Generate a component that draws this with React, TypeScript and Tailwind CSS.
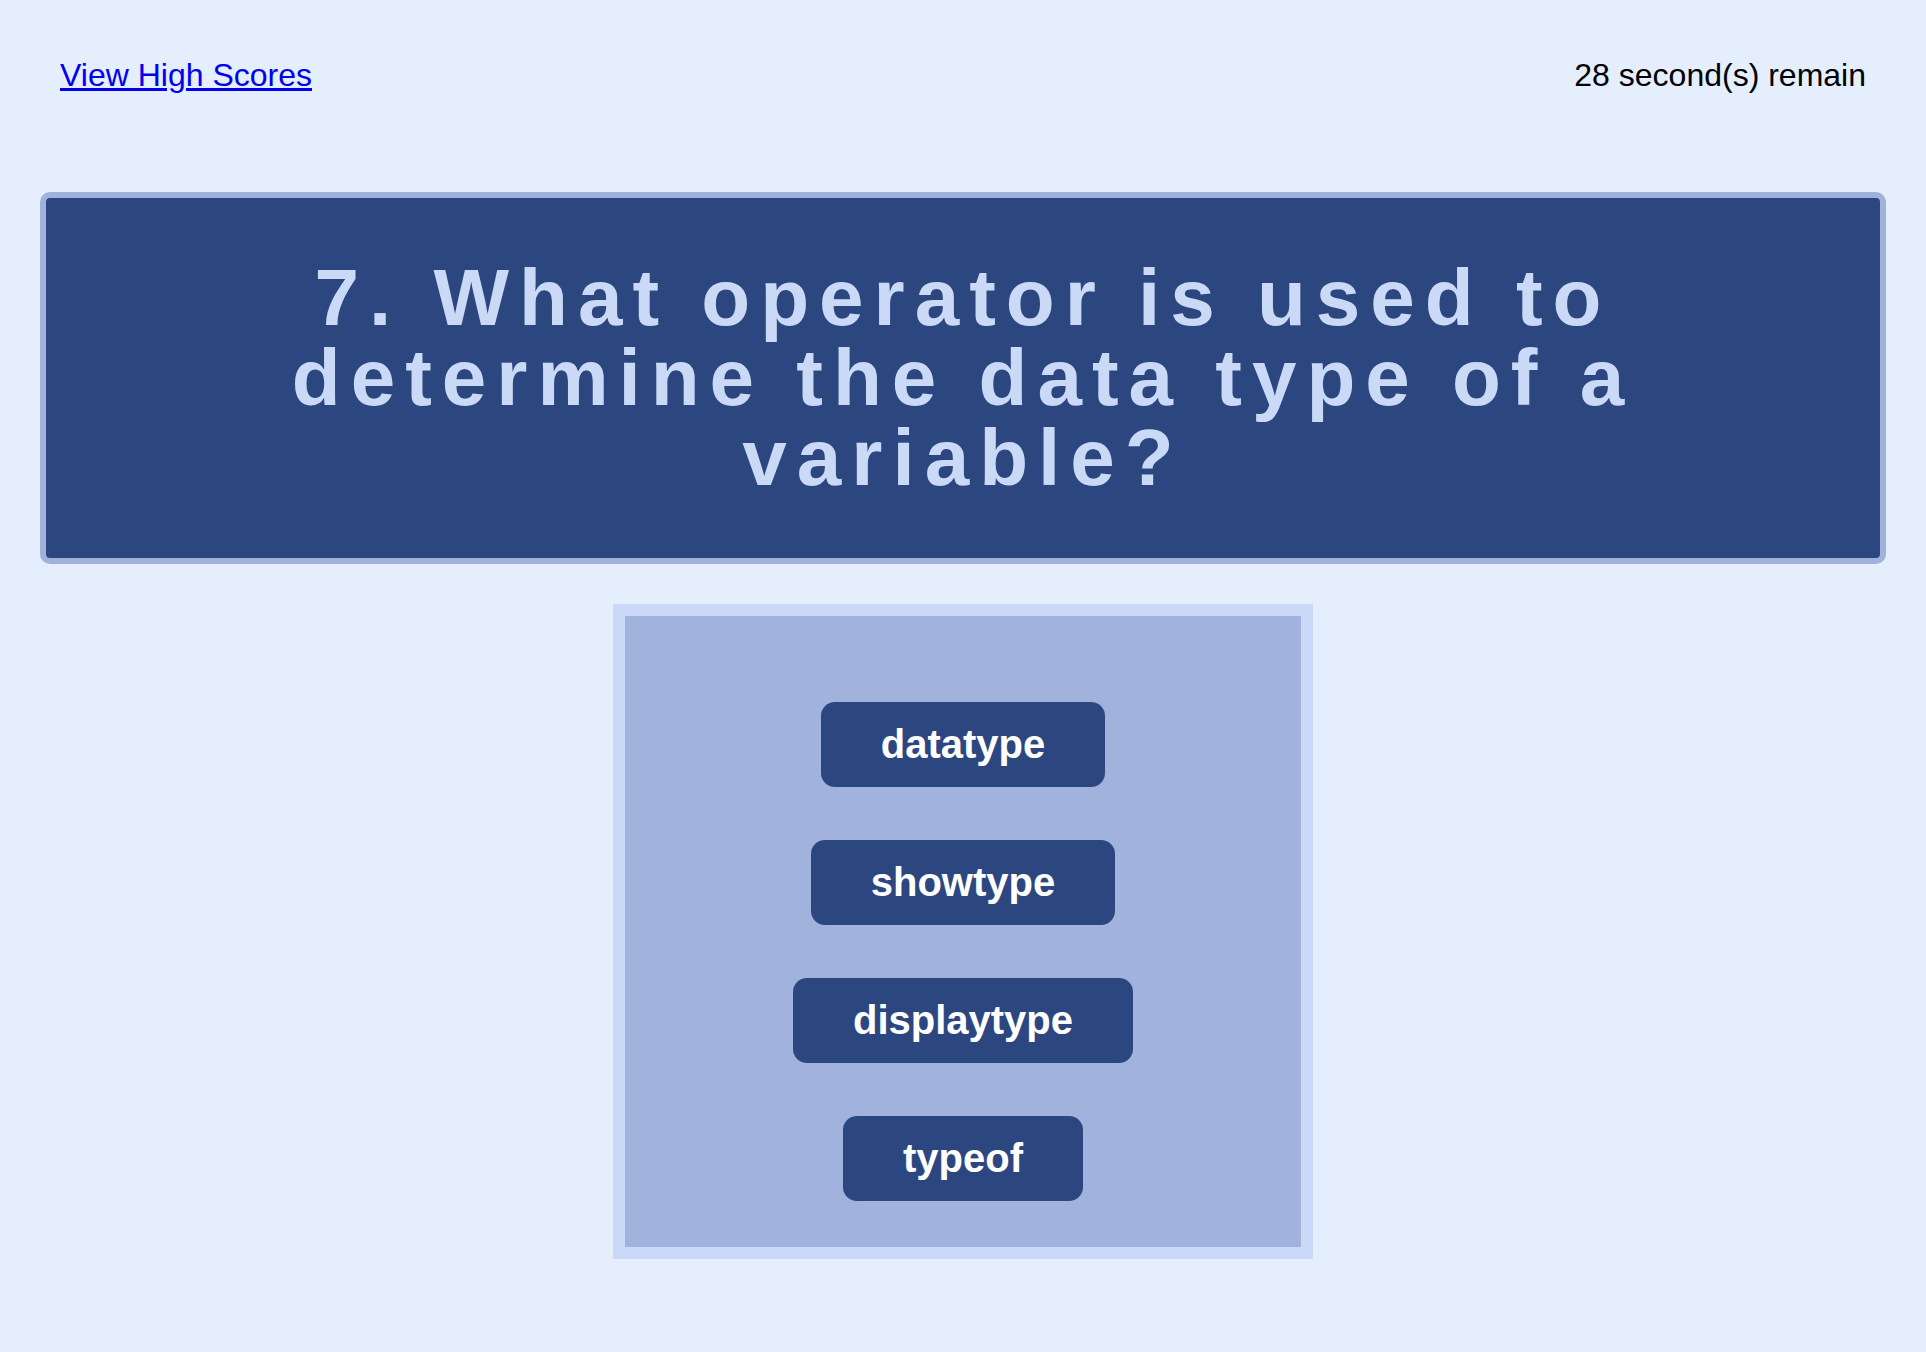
import React from 'react'

const answers = ['datatype', 'showtype', 'displaytype', 'typeof']

export default function App() {
  return (
    <div className="min-h-[1352px] w-full bg-[#e4eefd] font-['Liberation_Sans',Arial,sans-serif]">
      {/* header */}
      <header className="flex items-center justify-between px-[60px] pt-[57px] text-[32px] leading-[37px]">
        <a href="#" className="text-[#0000ee] underline">View High Scores</a>
        <span className="text-black">28 second(s) remain</span>
      </header>

      {/* question */}
      <div className="mx-[40px] mt-[98px] rounded-[10px] border-[6px] border-[#a0b2dc] bg-[#2c4780] py-[60px]">
        <h1 className="mx-auto max-w-[1440px] text-center text-[80px] font-bold leading-[80px] tracking-[10px] text-[#cad9f6]">
          7. What operator is used to determine the data type of a variable?
        </h1>
      </div>

      {/* answers */}
      <div className="mx-auto mt-[40px] w-[700px] border-[12px] border-[#c9d9f7] bg-[#a1b3dd] pt-[86px] pb-[46px]">
        <div className="flex flex-col items-center gap-[53px]">
          {answers.map((a) => (
            <button
              key={a}
              className="rounded-[14px] bg-[#2c4780] px-[60px] py-[20px] text-[40px] font-bold leading-[45px] text-white"
            >
              {a}
            </button>
          ))}
        </div>
      </div>
    </div>
  )
}
